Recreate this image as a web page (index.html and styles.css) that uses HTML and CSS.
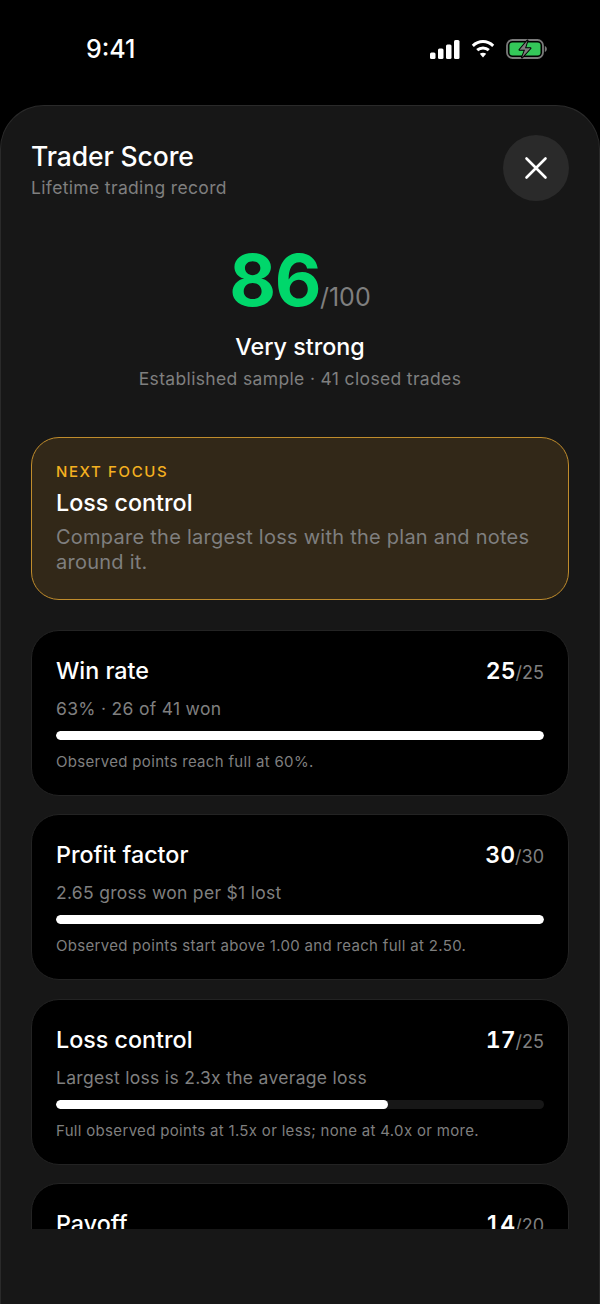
FILE: index.html
```html
<!DOCTYPE html>
<html lang="en">
<head>
<meta charset="utf-8">
<title>Trader Score</title>
<link rel="stylesheet" href="styles.css">
</head>
<body>
<div class="phone">
  <div class="status">
    <span class="time">9:41</span>
    <div class="status-icons">
      <svg width="30" height="19" viewBox="0 0 30 19"><g fill="#fff"><rect x="0" y="12.500" width="5.500" height="6.500" rx="1.500"/><rect x="8" y="8.500" width="5.500" height="10.500" rx="1.500"/><rect x="16" y="4.500" width="5.500" height="14.500" rx="1.500"/><rect x="24" y="0" width="5.500" height="19" rx="1.500"/></g></svg>
      <svg class="wifi" width="24" height="20" viewBox="0 0 24 20"><g fill="none" stroke="#fff" stroke-width="3"><path d="M1.800 6.800C7.800 1.200 16.200 1.200 22.200 6.800"/><path d="M6.200 11.200C9.500 8.100 14.500 8.100 17.800 11.200"/></g><path d="M8.800 14.800C10.700 13.300 13.300 13.300 15.200 14.800L12 18.500Z" fill="#fff"/></svg>
      <svg class="battery" width="41" height="20" viewBox="0 0 41 20"><rect x="1" y="1" width="36" height="18" rx="5.500" fill="none" stroke="#7a7a7a" stroke-width="1.800"/><rect x="3.500" y="3.500" width="31" height="13" rx="3" fill="#34c759"/><path d="M38.800 7v6c1.400-.5 2-1.600 2-3s-.6-2.500-2-3Z" fill="#7a7a7a"/><path d="M21.500 1.500 13.500 10.800h5.500L16 18.500 24.500 9.200h-5.500Z" fill="#7d7d7d" stroke="#000" stroke-width="2" stroke-linejoin="round" paint-order="stroke"/></svg>
    </div>
  </div>
  <section class="sheet">
    <header class="sheet-head">
      <div>
        <h1 class="title">Trader Score</h1>
        <p class="subtitle">Lifetime trading record</p>
      </div>
      <button class="close" aria-label="Close">
        <svg width="24" height="24" viewBox="0 0 24 24"><path d="M2.500 2.500 21.500 21.500M21.500 2.500 2.500 21.500" stroke="#fff" stroke-width="2.600" stroke-linecap="round"/></svg>
      </button>
    </header>
    <div class="scroll">
      <div class="score">
        <div class="score-line"><span class="score-num">86</span><span class="score-max">/100</span></div>
        <div class="score-label">Very strong</div>
        <div class="score-note">Established sample · 41 closed trades</div>
      </div>
      <div class="focus">
        <div class="focus-tag">NEXT FOCUS</div>
        <div class="focus-title">Loss control</div>
        <p class="focus-text">Compare the largest loss with the plan and notes around it.</p>
      </div>
      <div class="cards">
        <article class="card">
          <div class="card-top"><span class="card-name">Win rate</span><span class="pts"><b>25</b><i>/25</i></span></div>
          <div class="card-detail">63% · 26 of 41 won</div>
          <div class="track"><div class="fill" style="width:100%"></div></div>
          <div class="card-hint">Observed points reach full at 60%.</div>
        </article>
        <article class="card">
          <div class="card-top"><span class="card-name">Profit factor</span><span class="pts"><b>30</b><i>/30</i></span></div>
          <div class="card-detail">2.65 gross won per $1 lost</div>
          <div class="track"><div class="fill" style="width:100%"></div></div>
          <div class="card-hint">Observed points start above 1.00 and reach full at 2.50.</div>
        </article>
        <article class="card">
          <div class="card-top"><span class="card-name">Loss control</span><span class="pts"><b>17</b><i>/25</i></span></div>
          <div class="card-detail">Largest loss is 2.3x the average loss</div>
          <div class="track"><div class="fill" style="width:68%"></div></div>
          <div class="card-hint">Full observed points at 1.5x or less; none at 4.0x or more.</div>
        </article>
        <article class="card">
          <div class="card-top"><span class="card-name">Payoff</span><span class="pts"><b>14</b><i>/20</i></span></div>
        </article>
      </div>
    </div>
  </section>
</div>
</body>
</html>
```
FILE: styles.css
```css
* { box-sizing: border-box; }
html, body { margin: 0; padding: 0; background: #000; }
body { font-family: Inter, "Liberation Sans", sans-serif; color: #fff; -webkit-font-smoothing: antialiased; }
.phone { width: 600px; height: 1304px; display: flex; flex-direction: column; overflow: hidden; background: #000; }
.status { height: 105px; flex: none; display: flex; justify-content: space-between; align-items: flex-start; padding: 35px 53px 0 86px; }
.time { font-size: 25px; line-height: 28px; font-weight: 500; letter-spacing: 0; }
.status-icons { display: flex; align-items: center; gap: 11px; height: 28px; }
.status-icons svg { display: block; }
.sheet { flex: 1; background: #171717; border: 1px solid #2a2a2a; border-bottom: 0; border-radius: 44px 44px 0 0; padding: 29px 30px 75px; display: flex; flex-direction: column; min-height: 0; }
.sheet-head { display: flex; justify-content: space-between; align-items: flex-start; flex: none; }
.title { margin: 4px 0 0; font-size: 26.500px; line-height: 34px; font-weight: 500; letter-spacing: -.1px; }
.subtitle { margin: 2px 0 0; font-size: 17.500px; line-height: 26px; color: #7f7f7f; letter-spacing: .35px; }
.close { width: 66px; height: 66px; border-radius: 50%; border: 0; padding: 0; background: #2a2a2a; display: flex; align-items: center; justify-content: center; }
.close svg { display: block; }
.scroll { flex: 1; min-height: 0; overflow: hidden; }
.score { text-align: center; margin-top: 34px; }
.score-line { display: flex; justify-content: center; align-items: baseline; height: 90px; line-height: 90px; }
.score-num { font-size: 72px; font-weight: 700; color: #00d76b; letter-spacing: -1.500px; }
.score-max { font-size: 25px; color: #7f7f7f; }
.score-label { font-size: 23.300px; line-height: 30px; font-weight: 500; margin-top: 7px; }
.score-note { font-size: 17.500px; line-height: 26px; color: #7f7f7f; margin-top: 4px; letter-spacing: .35px; }
.focus { margin-top: 45px; height: 163px; background: #322818; border: 1.500px solid #c08c2c; border-radius: 28px; padding: 24px 24px 0; }
.focus-tag { font-size: 15px; line-height: 20px; font-weight: 500; letter-spacing: 1.600px; color: #f5b120; }
.focus-title { font-size: 23.300px; line-height: 30px; font-weight: 500; margin-top: 6px; }
.focus-text { margin: 7px 0 0; font-size: 20px; line-height: 25px; color: #7f7f7f; letter-spacing: .25px; }
.cards { display: flex; flex-direction: column; gap: 18.400px; margin-top: 30px; }
.card { height: 166px; flex: none; background: #000; border: 1px solid #232323; border-radius: 28px; padding: 25px 24px 0; }
.card-top { display: flex; justify-content: space-between; align-items: baseline; height: 30px; line-height: 30px; }
.card-name { font-size: 23.300px; font-weight: 500; }
.pts b { font-size: 23px; font-weight: 600; font-variant-numeric: tabular-nums; }
.pts i { font-style: normal; font-size: 18px; color: #7f7f7f; }
.card-detail { font-size: 17.500px; line-height: 26px; color: #7f7f7f; margin-top: 10px; letter-spacing: .3px; }
.track { height: 9px; margin-top: 9px; background: #171717; border-radius: 5px; overflow: hidden; }
.fill { height: 100%; background: #fff; border-radius: 5px; }
.card-hint { font-size: 15px; line-height: 20px; color: #7f7f7f; margin-top: 12px; letter-spacing: .32px; }
```
